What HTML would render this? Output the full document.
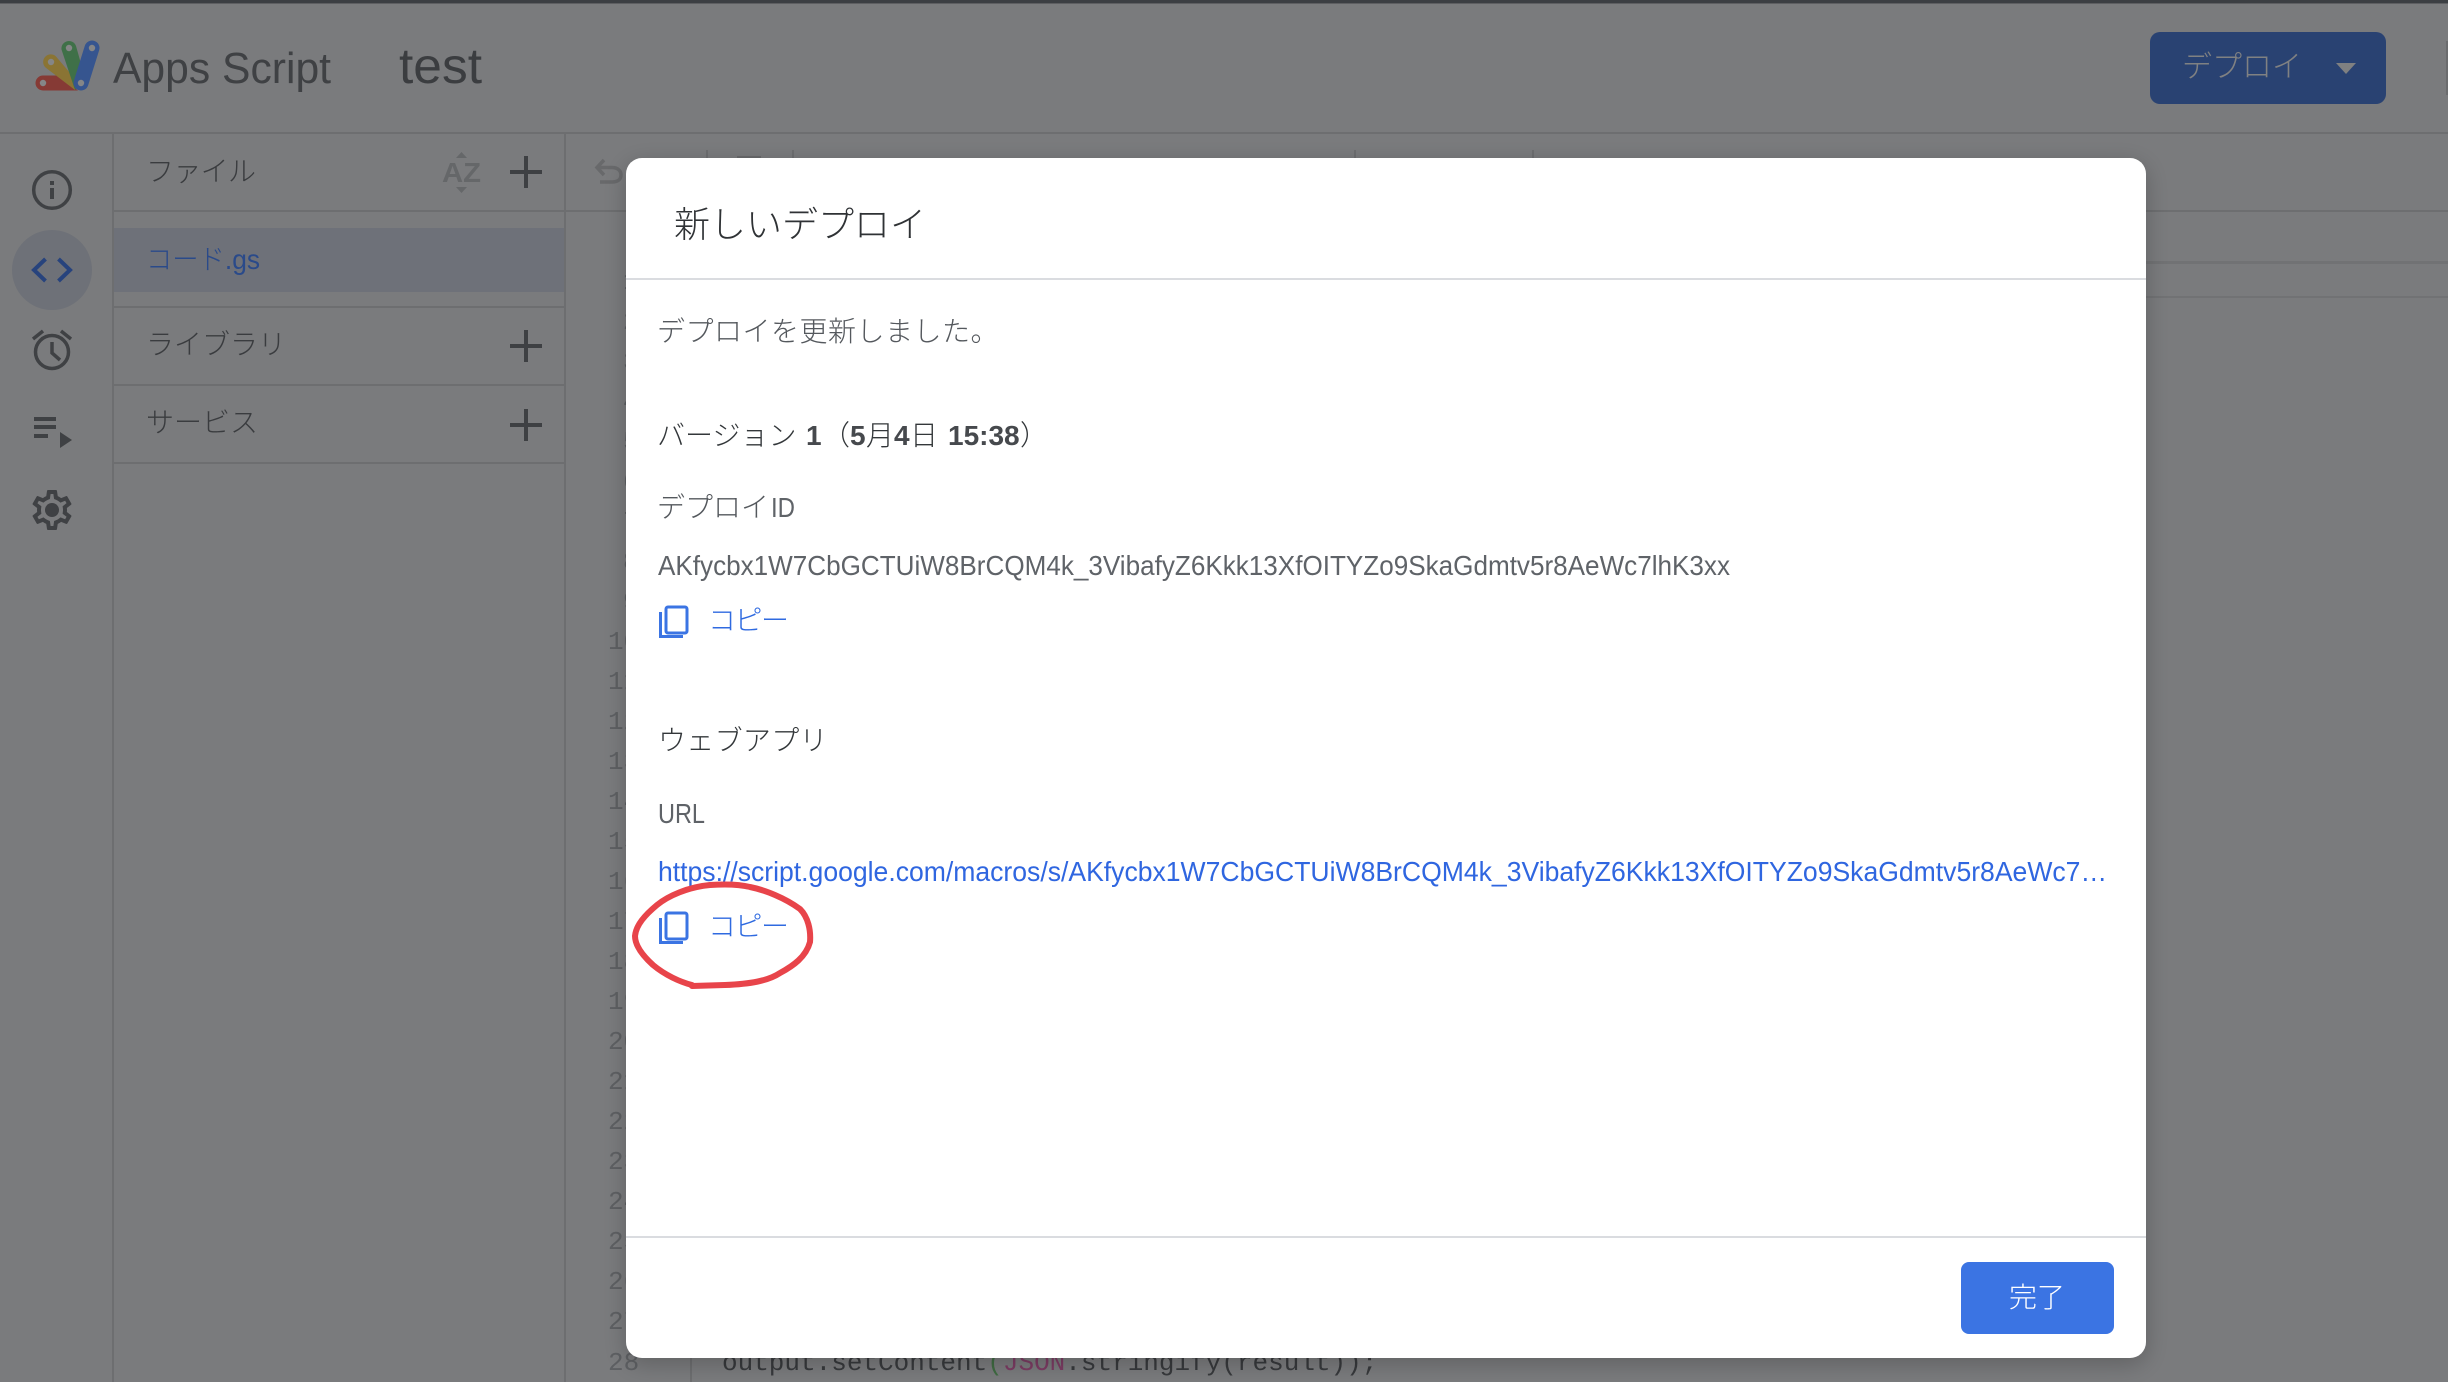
<!DOCTYPE html>
<html lang="ja">
<head>
<meta charset="utf-8">
<title>Apps Script</title>
<style>
html,body{margin:0;padding:0;width:2448px;height:1382px;overflow:hidden;background:#7a7b7d}
svg{display:block}
text{font-family:"Liberation Sans","Noto Sans CJK JP",sans-serif;white-space:pre}
.mono{font-family:"Liberation Mono",monospace}
</style>
</head>
<body>
<svg xmlns="http://www.w3.org/2000/svg" width="2448" height="1382" viewBox="0 0 2448 1382">
<defs>
<filter id="sh" x="-5%" y="-5%" width="110%" height="110%">
<feDropShadow dx="0" dy="6" stdDeviation="12" flood-color="#000" flood-opacity=".22"/>
</filter>
</defs>
<!-- page background -->
<rect width="2448" height="1382" fill="#7a7b7d"/>
<rect width="2448" height="3" fill="#3c3f43"/>
<rect y="3" width="2448" height="1" fill="#5e5f62"/>

<!-- header -->
<rect y="132" width="2448" height="2" fill="#6d6e70"/>
<path d="M43 90.500A7.500 7.500 0 0 1 43 75.500L58 75.500L78 90.500Z" fill="#863a35"/>
<path d="M45.500 67.500A7.500 7.500 0 0 1 56 56.500L76 80L75 90Z" fill="#8a7434"/>
<path d="M61.500 49.500A7.500 7.500 0 0 1 76 46L85 78L75 90Z" fill="#3f7048"/>
<path d="M92 48L81 83" stroke="#36558f" stroke-width="15" stroke-linecap="round" fill="none"/>
<circle cx="43" cy="83" r="3.200" fill="#858687"/>
<circle cx="51" cy="62" r="3.200" fill="#858687"/>
<circle cx="69" cy="48" r="3.200" fill="#858687"/>
<circle cx="92" cy="48" r="3.200" fill="#858687"/>
<circle cx="81" cy="83" r="3.200" fill="#858687"/>
<text x="113" y="83" font-size="44" fill="#3f4144" textLength="218" lengthAdjust="spacingAndGlyphs">Apps Script</text>
<text x="399" y="83" font-size="50" fill="#3b3d40" textLength="83" lengthAdjust="spacingAndGlyphs">test</text>
<rect x="2150" y="32" width="236" height="72" rx="10" fill="#294272"/>
<text x="2182" y="77" font-size="30" font-weight="300" fill="#808182">デプロイ</text>
<path d="M2336 63H2356L2346 74Z" fill="#7f8081"/>
<rect x="2446" y="41" width="2" height="54" fill="#6b6c6e"/>

<!-- left rail -->
<rect x="112" y="134" width="2" height="1248" fill="#6d6e70"/>
<g fill="none" stroke="#3f4144" stroke-width="3.500">
<circle cx="52" cy="190" r="18.300"/>
<circle cx="52" cy="352" r="16.500"/>
<path d="M52 342V353L60 360"/>
<path d="M33 339L43 331M71 339L61 331"/>
</g>
<rect x="50" y="188" width="4" height="11" fill="#3f4144"/>
<rect x="50" y="181" width="4" height="4" fill="#3f4144"/>
<circle cx="52" cy="270" r="40" fill="#6e7178"/>
<path d="M45.500 259L34 270L45.500 281M58.500 259L70 270L58.500 281" fill="none" stroke="#27437d" stroke-width="4"/>
<g fill="#3f4144">
<rect x="34" y="417" width="22" height="4"/>
<rect x="34" y="425" width="22" height="4"/>
<rect x="34" y="434" width="14" height="4"/>
<path d="M60 432L72 440L60 448Z"/>
<g transform="translate(28 486) scale(2)">
<path d="M19.430 12.980c.04-.32.07-.64.07-.98 0-.34-.03-.66-.07-.98l2.110-1.650c.19-.15.24-.42.12-.64l-2-3.460c-.09-.16-.26-.25-.44-.25-.06 0-.12.01-.17.03l-2.490 1c-.52-.4-1.080-.73-1.690-.98l-.38-2.650C14.460 2.180 14.250 2 14 2h-4c-.25 0-.46.18-.49.42l-.38 2.650c-.61.25-1.170.59-1.690.98l-2.490-1c-.06-.02-.12-.03-.18-.03-.17 0-.34.09-.43.25l-2 3.460c-.13.22-.07.49.12.64l2.110 1.650c-.04.32-.07.65-.07.98 0 .33.03.66.07.98l-2.110 1.650c-.19.15-.24.42-.12.64l2 3.460c.09.16.26.25.44.25.06 0 .12-.01.17-.03l2.490-1c.52.4 1.080.73 1.690.98l.38 2.650c.03.24.24.42.49.42h4c.25 0 .46-.18.49-.42l.38-2.650c.61-.25 1.170-.59 1.690-.98l2.490 1c.06.02.12.03.18.03.17 0 .34-.09.43-.25l2-3.460c.12-.22.07-.49-.12-.64l-2.110-1.650zm-1.980-1.710c.04.31.05.52.05.73 0 .21-.02.43-.05.73l-.14 1.130.89.7 1.080.84-.7 1.210-1.270-.51-1.040-.42-.9.68c-.43.32-.84.56-1.250.73l-1.060.43-.16 1.130-.2 1.350h-1.400l-.19-1.350-.16-1.130-1.060-.43c-.43-.18-.83-.41-1.230-.71l-.91-.7-1.060.43-1.270.51-.7-1.210 1.080-.84.89-.7-.14-1.130c-.03-.31-.05-.54-.05-.74s.02-.43.05-.73l.14-1.130-.89-.7-1.080-.84.7-1.210 1.270.51 1.040.42.9-.68c.43-.32.84-.56 1.250-.73l1.060-.43.16-1.130.2-1.350h1.390l.19 1.350.16 1.130 1.060.43c.43.18.83.41 1.230.71l.91.7 1.060-.43 1.270-.51.7 1.210-1.070.85-.89.7.14 1.130z"/>
<circle cx="12" cy="12" r="3.500"/>
</g>
</g>

<!-- files panel -->
<rect x="564" y="134" width="2" height="1248" fill="#6d6e70"/>
<rect x="114" y="210" width="2334" height="2" fill="#6d6e70"/>
<rect x="114" y="228" width="450" height="64" fill="#6e7179"/>
<rect x="114" y="306" width="450" height="2" fill="#6d6e70"/>
<rect x="114" y="384" width="450" height="2" fill="#6d6e70"/>
<rect x="114" y="462" width="450" height="2" fill="#6d6e70"/>
<text x="146" y="181" font-size="28" font-weight="300" fill="#3a3c3f" textLength="110">ファイル</text>
<text x="146" y="269" font-size="28" font-weight="300" fill="#2a4a8a" textLength="114" lengthAdjust="spacingAndGlyphs">コード.gs</text>
<text x="146" y="354" font-size="28" font-weight="300" fill="#3a3c3f">ライブラリ</text>
<text x="146" y="432" font-size="28" font-weight="300" fill="#3a3c3f">サービス</text>
<g fill="none" stroke="#3e4043" stroke-width="4">
<path d="M510 172H542M526 156V188"/>
<path d="M510 346H542M526 330V362"/>
<path d="M510 425H542M526 409V441"/>
</g>
<text x="442" y="182" font-size="28" font-weight="700" fill="#656769" textLength="39" lengthAdjust="spacingAndGlyphs">AZ</text>
<path d="M456 158L461.500 152L467 158ZM456 187L461.500 193L467 187Z" fill="#656769"/>

<!-- toolbar -->
<path d="M604 160L597 167.500L604 175M597 167.500H612C618 167.500 621 171 621 175C621 179 618 182 612 182H600" fill="none" stroke="#68696b" stroke-width="3.500"/>
<rect x="706" y="150" width="2" height="9" fill="#6d6e70"/>
<rect x="792" y="150" width="2" height="9" fill="#6d6e70"/>
<rect x="737" y="156" width="24" height="3" fill="#68696b"/>
<rect x="1354" y="150" width="2" height="9" fill="#6d6e70"/>
<rect x="1532" y="150" width="2" height="9" fill="#6d6e70"/>

<!-- editor -->
<rect x="692" y="261" width="1756" height="3" fill="#717274"/>
<rect x="692" y="296" width="1756" height="2" fill="#717274"/>
<rect x="690" y="212" width="2" height="1170" fill="#6d6e70"/>
<g class="mono" font-size="26" fill="#5e6063">
<text class="mono" x="623" y="289">1</text><text class="mono" x="623" y="329">2</text><text class="mono" x="623" y="369">3</text>
<text class="mono" x="623" y="409">4</text><text class="mono" x="623" y="449">5</text><text class="mono" x="623" y="489">6</text>
<text class="mono" x="623" y="529">7</text><text class="mono" x="623" y="569">8</text><text class="mono" x="623" y="609">9</text>
<text class="mono" x="608" y="649">10</text><text class="mono" x="608" y="689">11</text><text class="mono" x="608" y="729">12</text>
<text class="mono" x="608" y="769">13</text><text class="mono" x="608" y="809">14</text><text class="mono" x="608" y="849">15</text>
<text class="mono" x="608" y="889">16</text><text class="mono" x="608" y="929">17</text><text class="mono" x="608" y="969">18</text>
<text class="mono" x="608" y="1009">19</text><text class="mono" x="608" y="1049">20</text><text class="mono" x="608" y="1089">21</text>
<text class="mono" x="608" y="1129">22</text><text class="mono" x="608" y="1169">23</text><text class="mono" x="608" y="1209">24</text>
<text class="mono" x="608" y="1249">25</text><text class="mono" x="608" y="1289">26</text><text class="mono" x="608" y="1329">27</text>
<text class="mono" x="608" y="1370">28</text>
</g>
<text class="mono" x="722" y="1370" font-size="26" fill="#37393c">output.setContent<tspan fill="#3f6b42">(</tspan><tspan fill="#7c3c63">JSON</tspan>.stringify(result));</text>

<!-- dialog -->
<rect x="626" y="158" width="1520" height="1200" rx="16" fill="#fff" filter="url(#sh)"/>
<text x="674" y="237" font-size="36" font-weight="300" fill="#2f3235">新しいデプロイ</text>
<rect x="626" y="278" width="1520" height="2" fill="#dadce0"/>
<text x="657" y="341" font-size="28" font-weight="300" fill="#54585d" letter-spacing=".5">デプロイを更新しました。</text>

<text x="657" y="445" font-size="28" font-weight="300" fill="#33373a">バージョン<tspan x="806" font-weight="700" fill="#46494d">1</tspan><tspan x="822">（</tspan><tspan x="850" font-weight="700" fill="#46494d">5</tspan><tspan x="866">月</tspan><tspan x="894" font-weight="700" fill="#46494d">4</tspan><tspan x="910">日</tspan><tspan x="948" font-weight="700" fill="#46494d">15:38</tspan><tspan x="1020">）</tspan></text>
<text x="657" y="517" font-size="28" font-weight="300" fill="#54585d">デプロイ</text>
<text x="771" y="517" font-size="28" fill="#5f6368" textLength="24" lengthAdjust="spacingAndGlyphs">ID</text>
<text x="658" y="575" font-size="28" fill="#5f6368" textLength="1072" lengthAdjust="spacingAndGlyphs">AKfycbx1W7CbGCTUiW8BrCQM4k_3VibafyZ6Kkk13XfOITYZo9SkaGdmtv5r8AeWc7lhK3xx</text>

<g fill="none" stroke="#3b74e3" stroke-width="3">
<rect x="666" y="607" width="21" height="26" rx="2"/>
<path d="M660.500 612V636.500H683"/>
</g>
<text x="708" y="630" font-size="28" font-weight="300" fill="#2f6ae0" textLength="81">コピー</text>

<text x="658" y="750" font-size="28" font-weight="300" fill="#33373a" letter-spacing=".3">ウェブアプリ</text>
<text x="658" y="823" font-size="28" fill="#5f6368" textLength="47" lengthAdjust="spacingAndGlyphs">URL</text>
<text x="658" y="881" font-size="28" fill="#2f66e0" textLength="1449" lengthAdjust="spacingAndGlyphs">https://script.google.com/macros/s/AKfycbx1W7CbGCTUiW8BrCQM4k_3VibafyZ6Kkk13XfOITYZo9SkaGdmtv5r8AeWc7…</text>

<g fill="none" stroke="#3b74e3" stroke-width="3">
<rect x="666" y="913" width="21" height="26" rx="2"/>
<path d="M660.500 918V942.500H683"/>
</g>
<text x="708" y="936" font-size="28" font-weight="300" fill="#2f6ae0" textLength="81">コピー</text>

<path d="M692 985C680 982 665 975 653 965C642 955 635 945 635 936C636 925 645 915 657 905C668 896 688 887 710 885C725 884 738 884 750 887C765 890 785 898 800 909C808 917 811 930 810 942C806 957 793 966 780 973C768 981 750 984 725 985L692 986" fill="none" stroke="#e8444a" stroke-width="6" stroke-linecap="round" stroke-linejoin="round"/>

<rect x="626" y="1236" width="1520" height="2" fill="#dadce0"/>
<rect x="1961" y="1262" width="153" height="72" rx="8" fill="#3b74e3"/>
<text x="2009" y="1307" font-size="28" font-weight="300" fill="#fff">完了</text>
</svg>
</body>
</html>
